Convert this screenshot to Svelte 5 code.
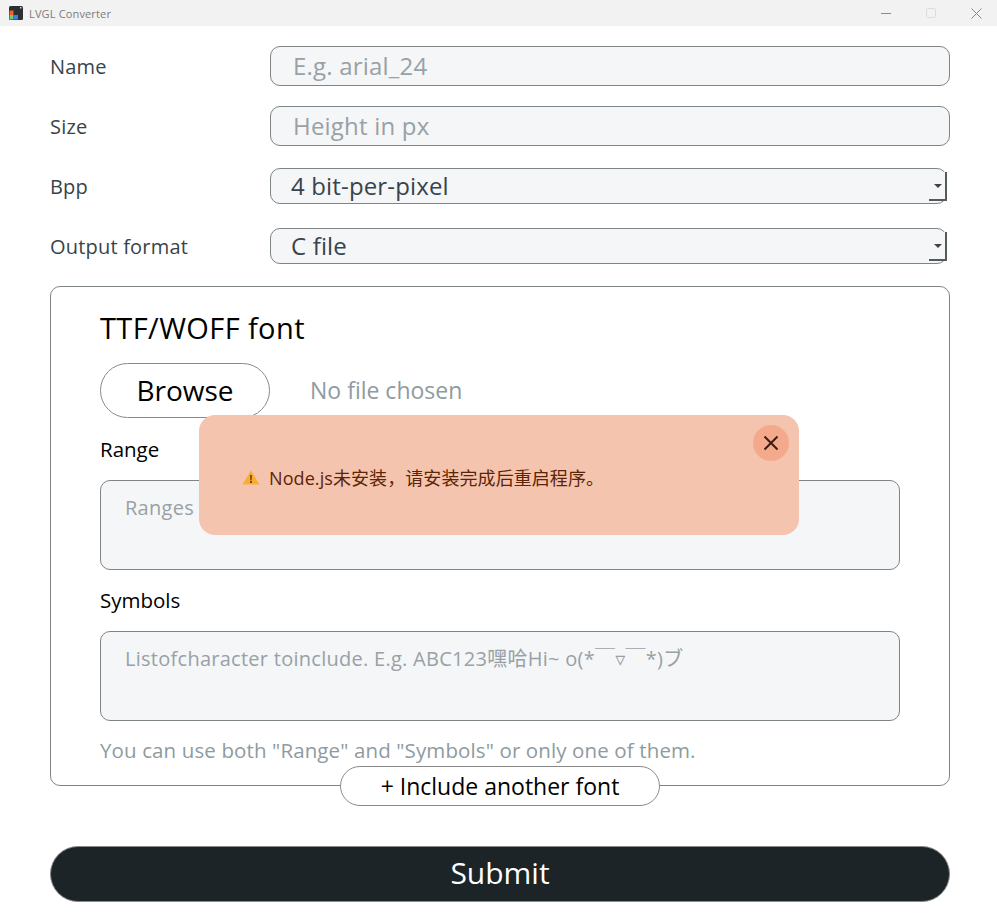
<script>
	const textFields = [
		{ label: 'Name', placeholder: 'E.g. arial_24' },
		{ label: 'Size', placeholder: 'Height in px' }
	];
	const selectFields = [
		{ label: 'Bpp', value: '4 bit-per-pixel' },
		{ label: 'Output format', value: 'C file' }
	];
</script>

<div class="titlebar">
	<div class="app-title">
		<svg width="14" height="14" viewBox="0 0 14 14" aria-hidden="true">
			<rect width="14" height="14" rx="1.5" fill="#2b2f33" />
			<rect x="0.5" y="4.5" width="4" height="4.5" fill="#f0622a" />
			<rect x="0.5" y="9" width="4" height="4.5" fill="#6fce6b" />
			<rect x="4.5" y="9" width="4.5" height="4.5" fill="#3f7de8" />
			<rect x="11" y="1" width="1.5" height="1.5" fill="#d8d8d8" />
		</svg>
		<span>LVGL Converter</span>
	</div>
	<div class="window-controls">
		<svg width="11" height="11" viewBox="0 0 11 11" aria-hidden="true"><path d="M0 5.5h10" stroke="#8a8a8a" /></svg>
		<svg width="11" height="11" viewBox="0 0 11 11" aria-hidden="true"><rect x="0.5" y="0.5" width="9" height="9" rx="1" fill="none" stroke="#dcdcdc" /></svg>
		<svg width="11" height="11" viewBox="0 0 11 11" aria-hidden="true"><path d="M0.5 0.5l10 10M10.5 0.5l-10 10" stroke="#8a8a8a" /></svg>
	</div>
</div>

<main class="page">
	<form class="form" onsubmit={(e) => e.preventDefault()}>
		{#each textFields as field}
			<div class="row">
				<span class="label">{field.label}</span>
				<input class="control text-input" type="text" placeholder={field.placeholder} />
			</div>
		{/each}

		{#each selectFields as field}
			<div class="row">
				<span class="label">{field.label}</span>
				<div class="select-wrap">
					<div class="control select-box">{field.value}</div>
					<span class="select-btn"></span>
				</div>
			</div>
		{/each}

		<section class="font-card">
			<h2>TTF/WOFF font</h2>
			<div class="file-row">
				<button class="browse" type="button">Browse</button>
				<span class="file-name">No file chosen</span>
			</div>

			<p class="field-title range-title">Range</p>
			<textarea class="area" placeholder="Ranges"></textarea>

			<p class="field-title symbols-title">Symbols</p>
			<textarea class="area" placeholder="Listofcharacter toinclude. E.g. ABC123嘿哈Hi~ o(*￣▿￣*)ブ"></textarea>

			<p class="hint">You can use both "Range" and "Symbols" or only one of them.</p>
			<button class="include" type="button">+ Include another font</button>
		</section>

		<button class="submit" type="submit">Submit</button>
	</form>

	<div class="alert" role="alert">
		<p class="alert-text"><span class="warn">
			<svg width="18" height="15" viewBox="0 0 18 15" aria-hidden="true">
				<path d="M9 0.5L17.6 14.5H0.4Z" fill="#fbad33" />
				<path d="M8.3 5h1.4l-0.2 5.4h-1zM8.2 11.3h1.6v1.6H8.2z" fill="#3a2500" />
			</svg>
		</span>Node.js未安装，请安装完成后重启程序。</p>
		<button class="alert-close" type="button" aria-label="Close">
			<svg width="16" height="16" viewBox="0 0 16 16" aria-hidden="true"><path d="M1.5 1.5l13 13M14.5 1.5l-13 13" stroke="#3b1d10" stroke-width="2" /></svg>
		</button>
	</div>
</main>

<style>
	:global(body) {
		background: #ffffff;
		font-family: 'Open Sans', 'Noto Sans', 'DejaVu Sans', 'Noto Sans CJK SC', sans-serif;
		color: #1d262a;
	}

	.titlebar {
		display: flex;
		align-items: center;
		justify-content: space-between;
		height: 26px;
		background: #f2f2f2;
	}

	.app-title {
		display: flex;
		align-items: center;
		gap: 6px;
		padding-left: 9px;
		font-size: 11px;
		letter-spacing: 0.15px;
		color: #7b7b7b;
	}

	.window-controls {
		display: flex;
		gap: 34px;
		padding-right: 15px;
	}

	.page {
		position: relative;
		padding: 10px 47px 16px 50px;
	}

	.form {
		display: flex;
		flex-direction: column;
	}

	.row {
		display: grid;
		grid-template-columns: 220px 1fr;
		align-items: center;
		height: 60px;
	}

	.label {
		font-size: 20px;
		color: #37444b;
		letter-spacing: 0.2px;
	}

	.control {
		box-sizing: border-box;
		border: 1px solid #7f8487;
		border-radius: 10px;
		background: #f5f6f8;
		font-family: inherit;
	}

	.text-input {
		width: 100%;
		height: 40px;
		padding: 0 22px 2px;
		font-size: 24px;
		letter-spacing: 0.2px;
		outline: none;
	}

	.text-input::placeholder {
		color: #98a1a5;
		opacity: 1;
	}

	.select-wrap {
		position: relative;
		margin-right: 3px;
	}

	.select-box {
		height: 36px;
		padding: 0 20px;
		font-size: 24px;
		line-height: 34px;
		letter-spacing: 0.15px;
		color: #37444b;
	}

	.select-btn {
		position: absolute;
		top: 4px;
		right: 0;
		box-sizing: border-box;
		width: 18px;
		height: 29px;
		border-right: 2px solid #555a5d;
		border-bottom: 2px solid #555a5d;
		background: #f5f6f8;
	}

	.select-btn::after {
		content: '';
		position: absolute;
		top: 12px;
		left: 5px;
		border-top: 4px solid #3c4448;
		border-left: 4px solid transparent;
		border-right: 4px solid transparent;
	}

	.font-card {
		position: relative;
		box-sizing: border-box;
		height: 500px;
		margin-top: 10px;
		padding: 22px 49px 0;
		border: 1px solid #7f8487;
		border-radius: 10px;
	}

	h2 {
		margin: 0;
		height: 38px;
		font-size: 29px;
		font-weight: 400;
		line-height: 38px;
		letter-spacing: 0.4px;
		color: #000000;
	}

	.file-row {
		display: flex;
		align-items: center;
		gap: 40px;
		margin-top: 16px;
	}

	.browse {
		box-sizing: border-box;
		width: 170px;
		height: 55px;
		padding: 0 0 2px;
		border: 1px solid #8a8a8a;
		border-radius: 28px;
		background: #ffffff;
		font-family: inherit;
		font-size: 28px;
		color: #000000;
	}

	.file-name {
		margin-top: -2px;
		font-size: 23px;
		color: #8e9b9f;
	}

	.field-title {
		margin: 0;
		font-size: 20.5px;
		line-height: 28px;
		color: #000000;
	}

	.range-title {
		margin-top: 17px;
	}

	.symbols-title {
		margin-top: 16px;
	}

	.area {
		display: block;
		box-sizing: border-box;
		width: 800px;
		height: 90px;
		margin-top: 17px;
		padding: 13px 24px;
		border: 1px solid #7f8487;
		border-radius: 10px;
		background: #f5f6f8;
		font-family: inherit;
		font-size: 20px;
		line-height: 27px;
		letter-spacing: 0.27px;
		resize: none;
		outline: none;
	}

	.area::placeholder {
		color: #98a1a5;
		opacity: 1;
	}

	.hint {
		margin: 15px 0 0;
		font-size: 20.5px;
		line-height: 28px;
		letter-spacing: 0.12px;
		color: #8e9b9f;
	}

	.include {
		position: absolute;
		left: 289px;
		bottom: -21px;
		box-sizing: border-box;
		width: 320px;
		height: 40px;
		padding: 0 0 1px;
		border: 1px solid #8a8a8a;
		border-radius: 20px;
		background: #ffffff;
		font-family: inherit;
		font-size: 23px;
		color: #000000;
	}

	.submit {
		height: 56px;
		margin-top: 60px;
		padding: 0 0 3px;
		border: 1px solid #8a8a8a;
		border-radius: 28px;
		background: #1c2428;
		font-family: inherit;
		font-size: 30px;
		color: #ffffff;
	}

	.alert {
		position: absolute;
		left: 199px;
		top: 389px;
		box-sizing: border-box;
		width: 600px;
		height: 120px;
		padding: 0 43px;
		display: flex;
		align-items: center;
		border-radius: 16px;
		background: #f5c4ae;
	}

	.alert-text {
		display: flex;
		align-items: center;
		margin: 4px 0 0;
		font-size: 18px;
		color: #5c2408;
		letter-spacing: 0.08px;
	}

	.warn {
		display: inline-flex;
		margin-right: 9px;
	}

	.alert-close {
		position: absolute;
		top: 10px;
		right: 10px;
		display: grid;
		place-items: center;
		width: 36px;
		height: 36px;
		padding: 0;
		border: 0;
		border-radius: 50%;
		background: #f5a98c;
	}
</style>
